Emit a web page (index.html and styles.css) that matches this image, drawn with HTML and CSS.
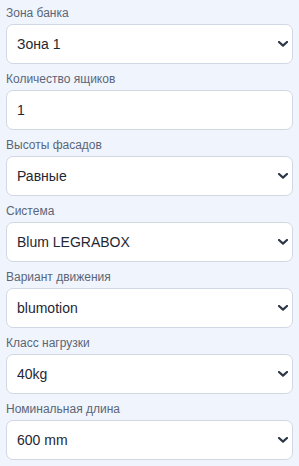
FILE: index.html
```html
<!DOCTYPE html>
<html lang="ru">
<head>
  <meta charset="UTF-8" />
  <meta name="viewport" content="width=device-width, initial-scale=1.0"/>
  <title>Параметры ящиков</title>
  <link rel="stylesheet" href="styles.css">
</head>
<body>

<form class="panel">
  <div class="field">
    <label for="zone">Зона банка</label>
    <select id="zone" class="control">
      <option>Зона 1</option>
    </select>
  </div>

  <div class="field">
    <label for="count">Количество ящиков</label>
    <input id="count" class="control" type="text" value="1">
  </div>

  <div class="field">
    <label for="heights">Высоты фасадов</label>
    <select id="heights" class="control">
      <option>Равные</option>
    </select>
  </div>

  <div class="field">
    <label for="system">Система</label>
    <select id="system" class="control">
      <option>Blum LEGRABOX</option>
    </select>
  </div>

  <div class="field">
    <label for="motion">Вариант движения</label>
    <select id="motion" class="control">
      <option>blumotion</option>
    </select>
  </div>

  <div class="field">
    <label for="load">Класс нагрузки</label>
    <select id="load" class="control">
      <option>40kg</option>
    </select>
  </div>

  <div class="field">
    <label for="length">Номинальная длина</label>
    <select id="length" class="control">
      <option>600 mm</option>
    </select>
  </div>
</form>

</body>
</html>
```

FILE: styles.css
```css
body {
  margin: 0;
  background: #f0f5fd;
  font-family: 'Liberation Sans', Arial, sans-serif;
}

.panel {
  display: flex;
  flex-direction: column;
  gap: 7px;
  padding: 5px 6px 0 6px;
}

.field {
  display: flex;
  flex-direction: column;
}

.field label {
  font-size: 12px;
  line-height: 17px;
  color: #5b6577;
  margin-bottom: 2px;
}

.control {
  box-sizing: border-box;
  width: 100%;
  height: 40px;
  margin: 0;
  padding: 0 10px;
  border: 1px solid #cfd8e3;
  border-radius: 7px;
  background-color: #fff;
  font-family: 'Liberation Sans', Arial, sans-serif;
  font-size: 14px;
  color: #1f2733;
  outline: none;
}

select.control {
  appearance: none;
  -webkit-appearance: none;
  padding-right: 24px;
  background-image: url("data:image/svg+xml,%3Csvg xmlns='http://www.w3.org/2000/svg' width='10' height='6' viewBox='0 0 10 6'%3E%3Cpath d='M1 1l4 3.6L9 1' fill='none' stroke='%232d3748' stroke-width='2.2' stroke-linecap='round' stroke-linejoin='round'/%3E%3C/svg%3E");
  background-repeat: no-repeat;
  background-position: right 4px center;
  background-size: 10px 6px;
}
```
